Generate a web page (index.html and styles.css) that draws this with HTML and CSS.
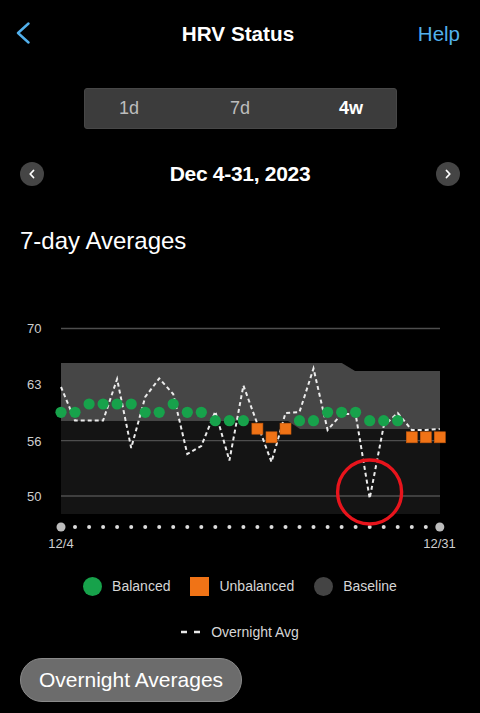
FILE: index.html
```html
<!DOCTYPE html>
<html lang="en">
<head>
  <meta charset="UTF-8">
  <meta name="viewport" content="width=device-width, initial-scale=1.0">
  <title>HRV Status</title>
  <link rel="stylesheet" href="styles.css">
</head>
<body>
  <header class="header">
    <a href="#" class="back">
      <svg width="14" height="22" viewBox="0 0 14 22"><path d="M12.5 1.5 L2 11 L12.5 20.5"/></svg>
    </a>
    <h1 class="title">HRV Status</h1>
    <a href="#" class="help">Help</a>
  </header>

  <div class="segment">
    <span>1d</span>
    <span>7d</span>
    <span class="active">4w</span>
  </div>

  <div class="date-row">
    <a href="#" class="round-btn">
      <svg width="8" height="10" viewBox="0 0 8 10"><path d="M5.5 1.5 L2.2 5 L5.5 8.5"/></svg>
    </a>
    <span class="date">Dec 4-31, 2023</span>
    <a href="#" class="round-btn">
      <svg width="8" height="10" viewBox="0 0 8 10"><path d="M2.5 1.5 L5.8 5 L2.5 8.5"/></svg>
    </a>
  </div>

  <h2 class="section-title">7-day Averages</h2>

  <svg class="chart" width="480" height="305" viewBox="0 255 480 305">
    <!-- axis labels -->
    <g class="axis-label">
      <text x="27" y="333">70</text>
      <text x="27" y="389">63</text>
      <text x="27" y="445.5">56</text>
      <text x="27" y="501">50</text>
    </g>

    <!-- plot area + baseline band -->
    <polygon class="plot-bg" points="61,363 341.7,363 355,371 440,371 440,514 61,514"/>
    <polygon class="band" points="61,363 341.7,363 355,371 440,371 440,429 300,429 288,421 61,421"/>

    <g class="grid">
      <line x1="61" y1="328.5" x2="440" y2="328.5"/>
      <line x1="61" y1="440.7" x2="440" y2="440.7"/>
      <line x1="61" y1="496" x2="440" y2="496"/>
    </g>

    <!-- overnight avg -->
    <polyline class="overnight" points="61,387 75,420.5 89.1,420.5 103.1,420.5 117.1,379 131.2,448 145.2,397 159.2,378.5 173.2,394 187.3,454 201.3,446 215.3,411.5 229.4,460.5 243.4,385.5 257.4,424 271.5,462 285.5,413 299.5,412 313.5,368.5 327.6,430 341.6,414 355.6,414 369.7,498.5 383.7,426 397.7,413 411.8,430 425.8,430 439.8,429"/>

    <!-- 7-day averages -->
    <g class="balanced">
      <circle cx="61" cy="412.3" r="5.6"/>
      <circle cx="75" cy="412.3" r="5.6"/>
      <circle cx="89.1" cy="404" r="5.6"/>
      <circle cx="103.1" cy="404" r="5.6"/>
      <circle cx="117.1" cy="404" r="5.6"/>
      <circle cx="131.2" cy="404" r="5.6"/>
      <circle cx="145.2" cy="412.3" r="5.6"/>
      <circle cx="159.2" cy="412.3" r="5.6"/>
      <circle cx="173.2" cy="404" r="5.6"/>
      <circle cx="187.3" cy="412.3" r="5.6"/>
      <circle cx="201.3" cy="412.3" r="5.6"/>
      <circle cx="215.3" cy="420.7" r="5.6"/>
      <circle cx="229.4" cy="420.7" r="5.6"/>
      <circle cx="243.4" cy="420.7" r="5.6"/>
      <circle cx="299.5" cy="420.7" r="5.6"/>
      <circle cx="313.5" cy="420.7" r="5.6"/>
      <circle cx="327.6" cy="412.3" r="5.6"/>
      <circle cx="341.6" cy="412.3" r="5.6"/>
      <circle cx="355.6" cy="412.3" r="5.6"/>
      <circle cx="369.7" cy="420.7" r="5.6"/>
      <circle cx="383.7" cy="420.7" r="5.6"/>
      <circle cx="397.7" cy="420.7" r="5.6"/>
    </g>
    <g class="unbalanced">
      <rect x="251.9" y="423.2" width="11" height="11"/>
      <rect x="266" y="431.8" width="11" height="11"/>
      <rect x="280" y="423.2" width="11" height="11"/>
      <rect x="406.3" y="431.8" width="11" height="11"/>
      <rect x="420.3" y="431.8" width="11" height="11"/>
      <rect x="434.3" y="431.8" width="11" height="11"/>
    </g>

    <!-- day ticks -->
    <g class="tick">
      <circle cx="75" cy="527" r="2"/><circle cx="89.1" cy="527" r="2"/><circle cx="103.1" cy="527" r="2"/>
      <circle cx="117.1" cy="527" r="2"/><circle cx="131.2" cy="527" r="2"/><circle cx="145.2" cy="527" r="2"/>
      <circle cx="159.2" cy="527" r="2"/><circle cx="173.2" cy="527" r="2"/><circle cx="187.3" cy="527" r="2"/>
      <circle cx="201.3" cy="527" r="2"/><circle cx="215.3" cy="527" r="2"/><circle cx="229.4" cy="527" r="2"/>
      <circle cx="243.4" cy="527" r="2"/><circle cx="257.4" cy="527" r="2"/><circle cx="271.5" cy="527" r="2"/>
      <circle cx="285.5" cy="527" r="2"/><circle cx="299.5" cy="527" r="2"/><circle cx="313.5" cy="527" r="2"/>
      <circle cx="327.6" cy="527" r="2"/><circle cx="341.6" cy="527" r="2"/><circle cx="355.6" cy="527" r="2"/>
      <circle cx="369.7" cy="527" r="2"/><circle cx="383.7" cy="527" r="2"/><circle cx="397.7" cy="527" r="2"/>
      <circle cx="411.8" cy="527" r="2"/><circle cx="425.8" cy="527" r="2"/>
    </g>
    <circle class="tick-end" cx="61" cy="527" r="4.5"/>
    <circle class="tick-end" cx="439.8" cy="527" r="4.5"/>
    <text class="day-label" x="61" y="548.3">12/4</text>
    <text class="day-label" x="439.5" y="548.3">12/31</text>

    <!-- highlight -->
    <circle class="highlight" cx="369.6" cy="492" r="32"/>
  </svg>

  <div class="legend">
    <div class="legend-item"><span class="swatch dot-green"></span>Balanced</div>
    <div class="legend-item"><span class="swatch sq-orange"></span>Unbalanced</div>
    <div class="legend-item"><span class="swatch dot-gray"></span>Baseline</div>
  </div>

  <div class="legend-line">
    <svg width="20" height="4" viewBox="0 0 20 4"><line x1="0" y1="2" x2="20" y2="2"/></svg>
    <span>Overnight Avg</span>
  </div>

  <button class="pill">Overnight Averages</button>
</body>
</html>
```

FILE: styles.css
```css
* {
  margin: 0;
  padding: 0;
  box-sizing: border-box;
  text-decoration: none;
}

:root {
  --bg-color: #000;
  --text-color: #fff;
  --link-color: #52b0ec;
  --control-color: #3c3c3c;
  --green: #17a24b;
  --orange: #f07316;
  --muted: #d6d6d6;
}

body {
  background: var(--bg-color);
  color: var(--text-color);
  font-family: "Liberation Sans", Arial, sans-serif;
  width: 480px;
}

/* top bar */
.header {
  height: 68px;
  display: grid;
  grid-template-columns: 1fr auto 1fr;
  align-items: center;
  padding: 0 20px 0 16px;
}

.back {
  display: flex;
  align-items: center;
  margin-top: -3px;
}

.back svg path {
  fill: none;
  stroke: var(--link-color);
  stroke-width: 2.4;
  stroke-linecap: round;
  stroke-linejoin: round;
}

.title {
  font-size: 20.7px;
  font-weight: 700;
}

.help {
  justify-self: end;
  color: var(--link-color);
  font-size: 20.5px;
}

/* range picker */
.segment {
  width: 313px;
  height: 41px;
  margin: 20px auto 0;
  background: var(--control-color);
  border: 1px solid #474747;
  border-radius: 3px;
  display: flex;
  justify-content: center;
  align-items: center;
}

.segment span {
  flex: 0 0 111px;
  text-align: center;
  font-size: 18px;
  color: #bdbdbd;
}

.segment .active {
  color: #fff;
  font-weight: 700;
}

.date-row {
  height: 24px;
  margin-top: 33px;
  padding: 0 20px;
  display: flex;
  justify-content: space-between;
  align-items: center;
}

.round-btn {
  width: 24px;
  height: 24px;
  border-radius: 50%;
  background: #454545;
  display: flex;
  justify-content: center;
  align-items: center;
}

.round-btn svg path {
  fill: none;
  stroke: #fff;
  stroke-width: 1.8;
  stroke-linecap: round;
  stroke-linejoin: round;
}

.date {
  font-size: 21px;
  font-weight: 700;
  letter-spacing: -0.3px;
}

.section-title {
  margin: 41px 0 0 20px;
  font-size: 24px;
  line-height: 28px;
  font-weight: 400;
}

/* chart */
.chart {
  display: block;
}

.axis-label text {
  fill: #cfcfcf;
  font-size: 13px;
}

.plot-bg {
  fill: #141414;
}

.band {
  fill: #464646;
}

.grid line {
  stroke: #4e4e4e;
  stroke-width: 1.3;
}

.overnight {
  fill: none;
  stroke: #ececec;
  stroke-width: 2;
  stroke-dasharray: 4 3;
}

.balanced circle {
  fill: var(--green);
}

.unbalanced rect {
  fill: var(--orange);
  stroke: #c85a0c;
  stroke-width: 0.6;
}

.tick circle {
  fill: #dcdcdc;
}

.tick-end {
  fill: #bcbcbc;
}

.day-label {
  fill: #cfcfcf;
  font-size: 13px;
  text-anchor: middle;
}

.highlight {
  fill: none;
  stroke: #e8141c;
  stroke-width: 3.4;
}

/* legend */
.legend {
  height: 20px;
  margin-top: 16px;
  display: flex;
  justify-content: center;
  align-items: center;
  gap: 20px;
}

.legend-item {
  display: flex;
  align-items: center;
  gap: 10px;
  font-size: 14px;
  color: var(--muted);
}

.swatch {
  width: 19px;
  height: 19px;
}

.dot-green {
  border-radius: 50%;
  background: var(--green);
}

.sq-orange {
  background: var(--orange);
}

.dot-gray {
  border-radius: 50%;
  background: #444;
}

.legend-line {
  height: 20px;
  margin-top: 26px;
  display: flex;
  justify-content: center;
  align-items: center;
  gap: 10px;
  font-size: 14px;
  color: var(--muted);
}

.legend-line line {
  stroke: #e8e8e8;
  stroke-width: 2.6;
  stroke-dasharray: 6 7;
}

.pill {
  display: block;
  margin: 16px 0 0 20px;
  height: 44px;
  padding: 0 18px;
  border-radius: 22px;
  background: #6c6c6c;
  border: 1px solid #8a8a8a;
  color: #fff;
  font: inherit;
  font-size: 21px;
  line-height: 42px;
}
```
